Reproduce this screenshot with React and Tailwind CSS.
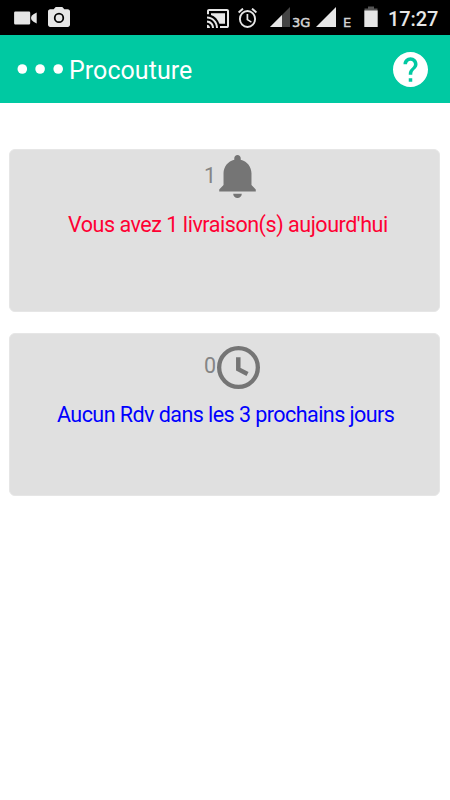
import React from "react";

function StatusBar() {
  return (
    <div className="flex h-[35px] w-full items-start bg-black text-[#e6e6e6]">
      <svg className="mt-[11px] ml-[14px] h-[14px] w-[23px] shrink-0" viewBox="0 0 23 14" fill="currentColor">
        <path d="M1.3 0.5H15a1.2 1.2 0 0 1 1.2 1.2v10.6a1.2 1.2 0 0 1-1.2 1.2H1.3a1.2 1.2 0 0 1-1.2-1.2V1.7a1.2 1.2 0 0 1 1.2-1.2zM22.7 1.6v10.8L19.5 10.8Q17 9.5 17 7T19.5 3.2z" />
      </svg>
      <svg className="mt-[7px] ml-[11px] h-[20px] w-[22px] shrink-0" viewBox="2 2 20 18" preserveAspectRatio="none" fill="currentColor">
        <path d="M9 2 7.17 4H4c-1.1 0-2 .9-2 2v12c0 1.1.9 2 2 2h16c1.1 0 2-.9 2-2V6c0-1.1-.9-2-2-2h-3.17L15 2H9zm3 14.5a4.7 4.7 0 1 1 0-9.4 4.7 4.7 0 0 1 0 9.4z" />
        <circle cx="12" cy="11.8" r="3.1" />
      </svg>
      <svg className="mt-[9px] ml-[137px] h-[19px] w-[22px] shrink-0" viewBox="1 3 22 18" preserveAspectRatio="none" fill="currentColor">
        <path d="M1 18v3h3c0-1.66-1.34-3-3-3zm0-4v2c2.76 0 5 2.24 5 5h2c0-3.87-3.13-7-7-7zm18-7H5v1.63c3.96 1.28 7.09 4.41 8.37 8.37H19V7zM1 10v2c4.97 0 9 4.03 9 9h2c0-6.08-4.93-11-11-11zm20-7H3c-1.1 0-2 .9-2 2v3h2V5h18v14h-7v2h7c1.1 0 2-.9 2-2V5c0-1.1-.9-2-2-2z" />
      </svg>
      <svg className="mt-[8px] ml-[9px] h-[20px] w-[19px] shrink-0" viewBox="2 2 20 20" preserveAspectRatio="none" fill="currentColor">
        <path d="M22 5.72l-4.6-3.86-1.29 1.53 4.6 3.86L22 5.72zM7.88 3.39 6.6 1.86 2 5.71l1.29 1.53 4.59-3.85zM12.8 8H11v6l4.75 2.85.75-1.23-3.7-2.37V8zM12 4a9 9 0 1 0 0 18 9 9 0 0 0 0-18zm0 16a7 7 0 1 1 0-14 7 7 0 0 1 0 14z" />
      </svg>
      <svg className="mt-[7px] ml-[13px] h-[20px] w-[20px] shrink-0" viewBox="0 0 20 20">
        <path d="M0 20 20 0v20z" fill="#444444" />
        <path d="M0 20 12 8v12z" fill="currentColor" />
      </svg>
      <span className="mt-[17px] ml-[2px] w-[19px] shrink-0 font-['DejaVu_Sans',sans-serif] text-[13px] leading-[12px] text-[#d4d4d4] [-webkit-text-stroke:0.5px_#d4d4d4]">3G</span>
      <svg className="mt-[7px] ml-[5px] h-[20px] w-[20px] shrink-0" viewBox="0 0 20 20" fill="currentColor">
        <path d="M0 20 20 0v20z" />
      </svg>
      <span className="mt-[17px] ml-[7px] w-[9px] shrink-0 font-['DejaVu_Sans',sans-serif] text-[13px] leading-[12px] text-[#d4d4d4] [-webkit-text-stroke:0.4px_#d4d4d4]">E</span>
      <svg className="mt-[6px] ml-[12px] h-[21px] w-[14px] shrink-0" viewBox="0 0 14 21">
        <path d="M4 0.5h6V2.5h3.5V5H0.5V2.5H4z" fill="#555555" />
        <path d="M0.3 4.5h13.4V21H0.3z" fill="currentColor" />
      </svg>
      <span className="mt-[7px] ml-[10px] shrink-0 text-[20px] leading-[24px] font-medium tracking-[-0.1px]">17:27</span>
    </div>
  );
}

function Header() {
  return (
    <header className="flex h-[68px] items-center bg-[#00c9a2] pr-[22px] pl-[17px] text-white">
      <svg className="h-[10px] w-[46px] shrink-0" viewBox="0 0 46 10" fill="currentColor">
        <circle cx="5.3" cy="5" r="4.8" />
        <circle cx="23.1" cy="5" r="4.8" />
        <circle cx="41.2" cy="5" r="4.8" />
      </svg>
      <h1 className="mt-[3px] ml-[6px] text-[25px] leading-[30px] font-normal tracking-[0.05px]">Procouture</h1>
      <svg className="mt-px ml-auto h-[35px] w-[35px] shrink-0" viewBox="2 2 20 20" fill="currentColor">
        <path d="M12 2C6.48 2 2 6.48 2 12s4.48 10 10 10 10-4.48 10-10S17.52 2 12 2zm1 17h-2v-2h2v2zm2.07-7.75-.9.92C13.45 12.9 13 13.5 13 15h-2v-.5c0-1.1.45-2.1 1.17-2.83l1.24-1.26c.37-.36.59-.86.59-1.41 0-1.1-.9-2-2-2s-2 .9-2 2H8c0-2.21 1.79-4 4-4s4 1.79 4 4c0 .88-.36 1.68-.93 2.25z" />
      </svg>
    </header>
  );
}

export default function App() {
  return (
    <div className="flex h-[800px] w-[450px] flex-col overflow-hidden bg-white font-[Roboto,sans-serif]">
      <StatusBar />
      <Header />
      <main className="flex flex-col gap-[21px] pt-[46px] pr-[10px] pl-[9px]">
        <section className="h-[163px] rounded-[6px] border border-[#e6e6e6] bg-[#e0e0e0]">
          <div className="flex h-[50px] pl-[194px] text-[#757575]">
            <span className="mt-[13px] w-[15px] text-[21.5px] leading-[26px] text-[#858585]">1</span>
            <svg className="mt-[5px] h-[43px] w-[37px]" viewBox="3 2 17 20" fill="currentColor">
              <path d="M11.5 22c1.1 0 2-.9 2-2h-4c0 1.1.9 2 2 2zm6.5-6v-5.5c0-3.07-2.13-5.64-5-6.32V3.5c0-.83-.67-1.5-1.5-1.5S10 2.67 10 3.5v.68c-2.87.68-5 3.25-5 6.32V16l-2 2v1h17v-1l-2-2z" />
            </svg>
          </div>
          <p className="mt-[12px] pl-[58px] text-[21.5px] leading-[26px] tracking-[-0.46px] whitespace-nowrap text-[#ff0033]">Vous avez 1 livraison(s) aujourd'hui</p>
        </section>
        <section className="h-[163px] rounded-[6px] border border-[#e6e6e6] bg-[#e0e0e0]">
          <div className="flex h-[56px] pl-[194px] text-[#757575]">
            <span className="mt-[19px] w-[13px] text-[21.5px] leading-[26px] text-[#858585]">0</span>
            <svg className="mt-[12px] h-[43px] w-[43px]" viewBox="2 2 20 20" fill="none" stroke="currentColor" strokeWidth="2">
              <circle cx="12" cy="12" r="9" />
              <path d="M11.9 7.2v5.6l4.3 2.2" strokeWidth="2.1" strokeLinejoin="miter" />
            </svg>
          </div>
          <p className="mt-[12px] pl-[47px] text-[21.5px] leading-[26px] tracking-[-0.55px] whitespace-nowrap text-[#0000ff]">Aucun Rdv dans les 3 prochains jours</p>
        </section>
      </main>
    </div>
  );
}
